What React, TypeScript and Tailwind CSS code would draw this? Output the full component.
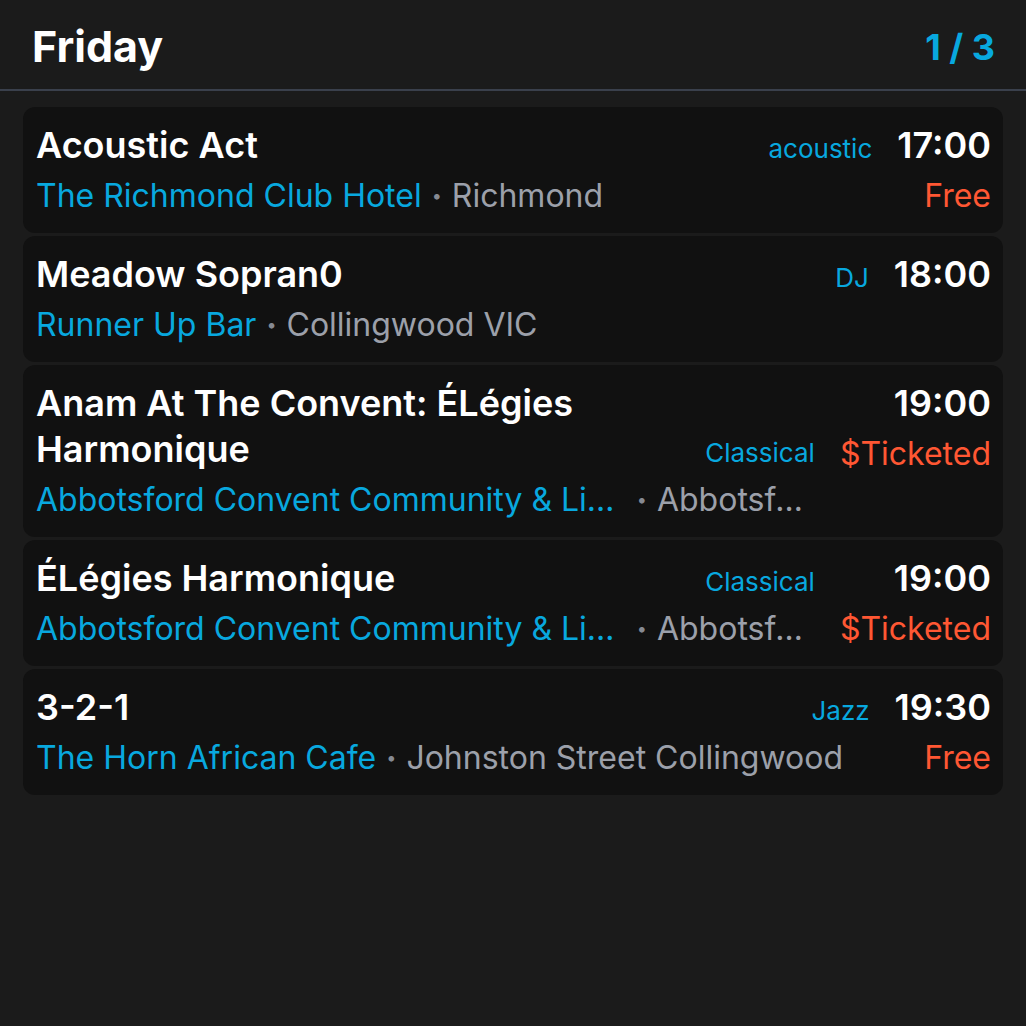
import React from "react";

type Gig = {
  title: string;
  venue: string;
  suburb: string;
  genre: string;
  time: string;
  price: string;
};

const gigs: Gig[] = [
  { title: "Acoustic Act", venue: "The Richmond Club Hotel", suburb: "Richmond", genre: "acoustic", time: "17:00", price: "Free" },
  { title: "Meadow Sopran0", venue: "Runner Up Bar", suburb: "Collingwood VIC", genre: "DJ", time: "18:00", price: "" },
  {
    title: "Anam At The Convent: ÉLégies Harmonique",
    venue: "Abbotsford Convent Community & Library",
    suburb: "Abbotsford",
    genre: "Classical",
    time: "19:00",
    price: "$Ticketed",
  },
  { title: "ÉLégies Harmonique", venue: "Abbotsford Convent Community & Library", suburb: "Abbotsford", genre: "Classical", time: "19:00", price: "$Ticketed" },
  { title: "3-2-1", venue: "The Horn African Cafe", suburb: "Johnston Street Collingwood", genre: "Jazz", time: "19:30", price: "Free" },
];

function GigCard({ gig }: { gig: Gig }) {
  return (
    <div className="flex gap-[25px] rounded-[12px] bg-[#111111] pl-[13px] pr-[12px] pt-[15px] pb-[17px]">
      <div className="flex min-w-0 flex-1 flex-col">
        {/* title + genre, genre sits on the last line of the title */}
        <div className="flex items-baseline-last gap-[25px]">
          <div className="min-w-0 flex-1 text-[36px] font-semibold leading-[46px] text-white">{gig.title}</div>
          <span className="shrink-0 text-[26px] text-[#08a8df]">{gig.genre}</span>
        </div>
        <div className="mt-[8px] flex min-w-0 items-center text-[32px] leading-[40px]">
          <span className="min-w-0 truncate text-[#08a8df]">{gig.venue}</span>
          <span className="mx-[10px] shrink-0 text-[18px] text-[#868a93]">•</span>
          <span className="min-w-0 truncate text-[#9ca0aa]">{gig.suburb}</span>
        </div>
      </div>
      <div className="flex shrink-0 flex-col items-end">
        <div className="text-[36px] font-semibold leading-[46px] text-white">{gig.time}</div>
        <div className="mt-[8px] text-[32px] leading-[40px] text-[#ff5733]">{gig.price}</div>
      </div>
    </div>
  );
}

export default function App() {
  return (
    <div className="min-h-[1026px] bg-[#1b1b1b] font-['Inter',sans-serif]">
      <header className="flex h-[91px] items-center justify-between border-b-2 border-[#3a404c] pl-[32px] pr-[31px] pt-[4px]">
        <h1 className="text-[43px] font-bold text-white">Friday</h1>
        <span className="text-[36px] font-bold text-[#08a8df]">1 / 3</span>
      </header>
      <div className="flex flex-col gap-[3px] px-[23px] pt-[16px]">
        {gigs.map((g, i) => (
          <GigCard key={i} gig={g} />
        ))}
      </div>
    </div>
  );
}
